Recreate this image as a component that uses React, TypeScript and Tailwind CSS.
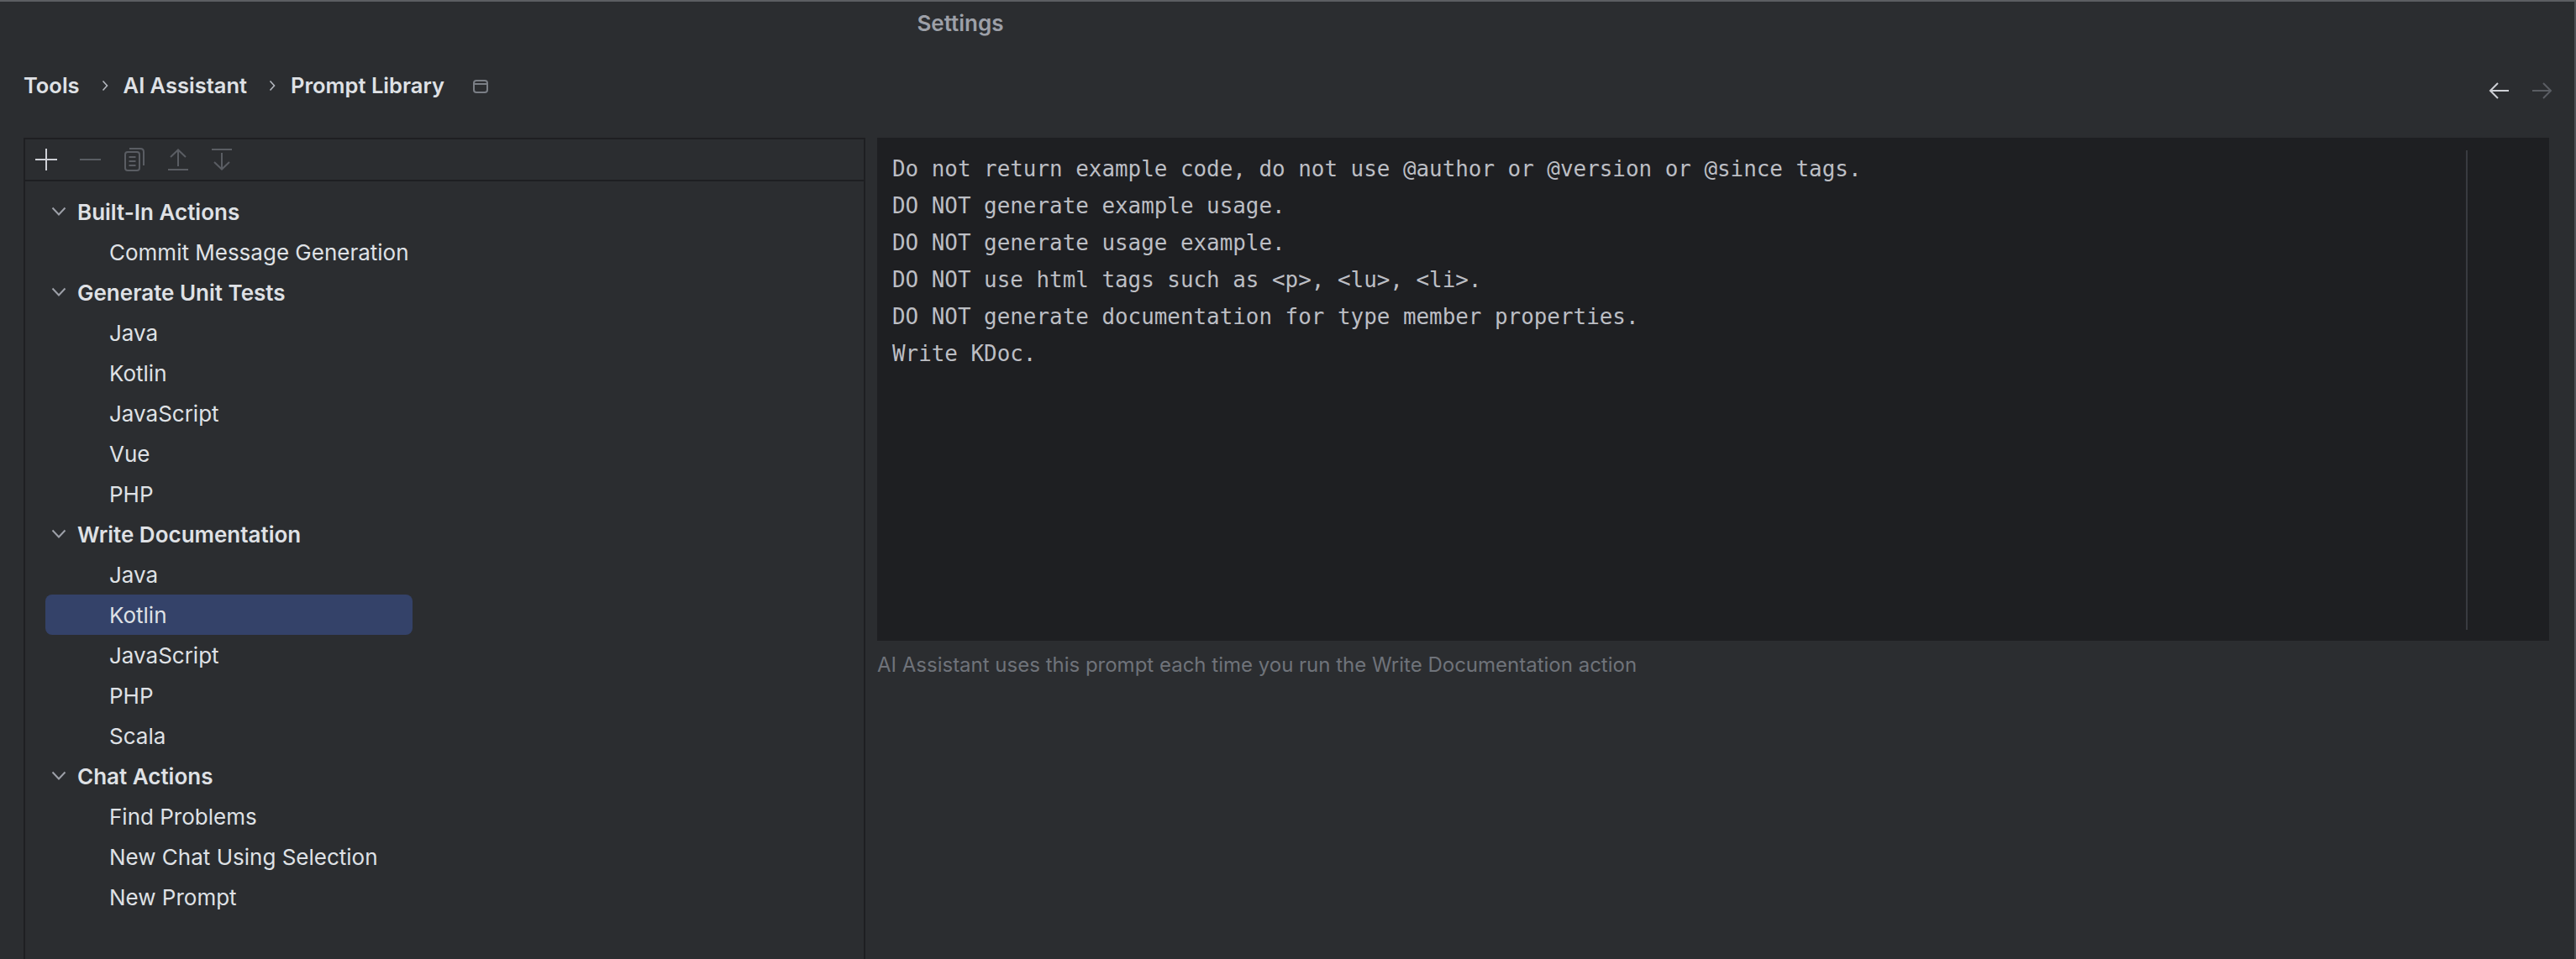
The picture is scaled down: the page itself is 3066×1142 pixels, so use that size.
import React from 'react';

const editorLines = [
  'Do not return example code, do not use @author or @version or @since tags.',
  'DO NOT generate example usage.',
  'DO NOT generate usage example.',
  'DO NOT use html tags such as <p>, <lu>, <li>.',
  'DO NOT generate documentation for type member properties.',
  'Write KDoc.',
];

interface TreeGroup {
  title: string;
  items: string[];
}

const groups: TreeGroup[] = [
  { title: 'Built-In Actions', items: ['Commit Message Generation'] },
  { title: 'Generate Unit Tests', items: ['Java', 'Kotlin', 'JavaScript', 'Vue', 'PHP'] },
  { title: 'Write Documentation', items: ['Java', 'Kotlin', 'JavaScript', 'PHP', 'Scala'] },
  { title: 'Chat Actions', items: ['Find Problems', 'New Chat Using Selection', 'New Prompt'] },
];

function Chevron() {
  return (
    <svg width="18" height="12" viewBox="0 0 18 12" fill="none" className="shrink-0">
      <path d="M1.5 1.5 L9 9.5 L16.5 1.5" stroke="#9da0a8" strokeWidth="2" />
    </svg>
  );
}

function BreadcrumbSeparator() {
  return (
    <svg width="8" height="14" viewBox="0 0 8 14" fill="none" className="shrink-0">
      <path d="M1.5 1.5 L6.5 7 L1.5 12.5" stroke="#b4b8bf" strokeWidth="1.6" />
    </svg>
  );
}

function Toolbar() {
  return (
    <div className="flex h-[50px] items-center border-b-2 border-[#1e1f22] pl-[12px]">
      <svg width="26" height="26" viewBox="0 0 26 26" fill="none" className="mr-[27px]">
        <path d="M13 0 V26 M0 13 H26" stroke="#ced0d6" strokeWidth="2" />
      </svg>
      <svg width="25" height="26" viewBox="0 0 25 26" fill="none" className="mr-[28px]">
        <path d="M0 13 H25" stroke="#5a5d63" strokeWidth="2" />
      </svg>
      <svg width="24" height="28" viewBox="0 0 24 28" fill="none" className="mr-[28px]">
        <rect x="1" y="5" width="17" height="22" rx="3" stroke="#5a5d63" strokeWidth="2" />
        <path d="M6 1 H19 Q23 1 23 5 V21" stroke="#5a5d63" strokeWidth="2" />
        <path d="M5.5 11 H13.5 M5.5 16 H13.5 M5.5 21 H13.5" stroke="#5a5d63" strokeWidth="2" />
      </svg>
      <svg width="24" height="26" viewBox="0 0 24 26" fill="none" className="mr-[28px]">
        <path d="M12 21 V2 M3 10 L12 1.5 L21 10 M0 25 H24" stroke="#5a5d63" strokeWidth="2" />
      </svg>
      <svg width="24" height="26" viewBox="0 0 24 26" fill="none">
        <path d="M0 1 H24 M12 5 V24 M3 16 L12 24.5 L21 16" stroke="#5a5d63" strokeWidth="2" />
      </svg>
    </div>
  );
}

function Tree() {
  return (
    <div className="pt-[12px]">
      {groups.map((group) => (
        <div key={group.title}>
          <div className="flex h-[48px] items-center pl-[31px]">
            <Chevron />
            <span className="ml-[13px] text-[26px] font-semibold text-[#dfe1e5]">{group.title}</span>
          </div>
          {group.items.map((item) => {
            const selected = group.title === 'Write Documentation' && item === 'Kotlin';
            return (
              <div
                key={item}
                className={
                  selected
                    ? 'ml-[24px] flex h-[48px] w-[437px] items-center rounded-[8px] bg-[#344269] pl-[76px] text-[26px] text-[#dfe1e5]'
                    : 'ml-[24px] flex h-[48px] w-[437px] items-center pl-[76px] text-[26px] text-[#dfe1e5]'
                }
              >
                {item}
              </div>
            );
          })}
        </div>
      ))}
    </div>
  );
}

export default function App() {
  return (
    <div className="flex h-[1142px] w-[3066px] flex-col overflow-hidden border-t-2 border-r-2 border-t-[#5c5e62] border-r-[#4e5055] bg-[#2b2d30] font-['Inter',sans-serif]">
      {/* Title */}
      <div className="flex h-[50px] items-center justify-center pr-[778px] text-[26px] font-semibold text-[#9da0a8]">
        Settings
      </div>

      {/* Breadcrumbs */}
      <div className="flex h-[112px] items-center pb-[12px] pl-[28px] pr-[26px] text-[25.5px] font-semibold text-[#dfe1e5]">
        <span>Tools</span>
        <span className="ml-[26px] mr-[18px]">
          <BreadcrumbSeparator />
        </span>
        <span>AI Assistant</span>
        <span className="ml-[26px] mr-[18px]">
          <BreadcrumbSeparator />
        </span>
        <span>Prompt Library</span>
        <svg width="18" height="16" viewBox="0 0 18 16" fill="none" className="ml-[34px] mt-[2px]">
          <rect x="1" y="1" width="16" height="14" rx="3" stroke="#7a7e85" strokeWidth="2" />
          <path d="M1 5 H17" stroke="#7a7e85" strokeWidth="2" />
        </svg>
        <div className="ml-auto mt-[12px] flex items-center gap-[28px]">
          <svg width="24" height="20" viewBox="0 0 24 20" fill="none">
            <path d="M24 10 H2 M11 1 L2 10 L11 19" stroke="#ced0d6" strokeWidth="2" />
          </svg>
          <svg width="24" height="20" viewBox="0 0 24 20" fill="none">
            <path d="M0 10 H22 M13 1 L22 10 L13 19" stroke="#5a5d63" strokeWidth="2" />
          </svg>
        </div>
      </div>

      {/* Body */}
      <div className="flex min-h-0 flex-1 pl-[28px] pr-[30px]">
        <div className="w-[1002px] shrink-0 border-x-2 border-t-2 border-[#1e1f22]">
          <Toolbar />
          <Tree />
        </div>
        <div className="ml-[14px] flex min-w-0 flex-1 flex-col">
          <div className="flex h-[599px] bg-[#1e1f22] pb-[13px] pt-[15px]">
            <div className="flex-1 pl-[18px] font-['DejaVu_Sans_Mono',monospace] text-[25.9px] leading-[44px] text-[#bcbec4]">
              {editorLines.map((line) => (
                <div key={line} className="whitespace-pre">
                  {line}
                </div>
              ))}
            </div>
            <div className="mr-[97px] w-[2px] bg-[#393b40]" />
          </div>
          <div className="pt-[14px] text-[24px] leading-[30px] text-[#6f737a]">
            AI Assistant uses this prompt each time you run the Write Documentation action
          </div>
        </div>
      </div>
    </div>
  );
}
